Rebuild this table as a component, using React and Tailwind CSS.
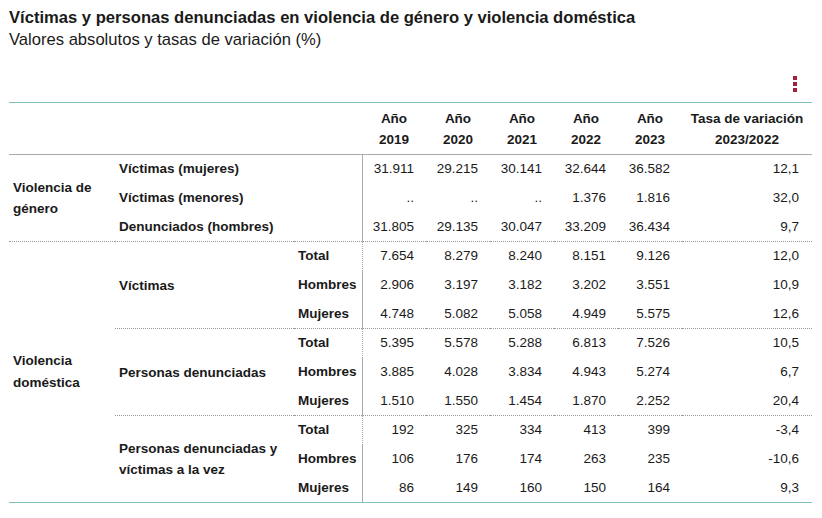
import React from 'react';

const years = ['2019', '2020', '2021', '2022', '2023'];

const genero = [
  { label: 'Víctimas (mujeres)', values: ['31.911', '29.215', '30.141', '32.644', '36.582'], rate: '12,1' },
  { label: 'Víctimas (menores)', values: ['..', '..', '..', '1.376', '1.816'], rate: '32,0' },
  { label: 'Denunciados (hombres)', values: ['31.805', '29.135', '30.047', '33.209', '36.434'], rate: '9,7' },
];

const domestica = [
  {
    label: 'Víctimas',
    rows: [
      { sex: 'Total', values: ['7.654', '8.279', '8.240', '8.151', '9.126'], rate: '12,0' },
      { sex: 'Hombres', values: ['2.906', '3.197', '3.182', '3.202', '3.551'], rate: '10,9' },
      { sex: 'Mujeres', values: ['4.748', '5.082', '5.058', '4.949', '5.575'], rate: '12,6' },
    ],
  },
  {
    label: 'Personas denunciadas',
    rows: [
      { sex: 'Total', values: ['5.395', '5.578', '5.288', '6.813', '7.526'], rate: '10,5' },
      { sex: 'Hombres', values: ['3.885', '4.028', '3.834', '4.943', '5.274'], rate: '6,7' },
      { sex: 'Mujeres', values: ['1.510', '1.550', '1.454', '1.870', '2.252'], rate: '20,4' },
    ],
  },
  {
    label: 'Personas denunciadas y víctimas a la vez',
    rows: [
      { sex: 'Total', values: ['192', '325', '334', '413', '399'], rate: '-3,4' },
      { sex: 'Hombres', values: ['106', '176', '174', '263', '235'], rate: '-10,6' },
      { sex: 'Mujeres', values: ['86', '149', '160', '150', '164'], rate: '9,3' },
    ],
  },
];

const ValueCells = ({ values, rate, dotted }) => {
  const top = dotted ? 'border-t border-dotted border-t-[#999]' : '';
  return (
    <>
      {values.map((v, i) => (
        <td
          key={i}
          className={`h-[29px] pr-3 text-right align-middle ${top} ${i === 0 ? 'border-l border-l-[#aaa]' : ''}`}
        >
          {v}
        </td>
      ))}
      <td className={`h-[29px] pr-[13px] text-right align-middle ${top}`}>{rate}</td>
    </>
  );
};

const App = () => {
  return (
    <div className="min-h-[518px] bg-white px-[9px] pt-[8px] font-['Liberation_Sans',Arial,sans-serif] text-[#1a1a1a]">
      <h1 className="text-[16.6px] font-bold leading-[20px]">
        Víctimas y personas denunciadas en violencia de género y violencia doméstica
      </h1>
      <p className="text-[16.6px] leading-[24px]">Valores absolutos y tasas de variación (%)</p>

      <div className="flex h-[50px] items-end justify-end pb-[10px] pr-[16px]">
        <div className="flex flex-col gap-[2px]">
          <span className="block h-[4px] w-[4px] bg-[#a3203f]" />
          <span className="block h-[4px] w-[4px] bg-[#a3203f]" />
          <span className="block h-[4px] w-[4px] bg-[#a3203f]" />
        </div>
      </div>

      <table className="w-[803px] table-fixed border-collapse border-y border-y-[#7fc0b8] text-[13.5px]">
        <colgroup>
          <col className="w-[106px]" />
          <col className="w-[179px]" />
          <col className="w-[68px]" />
          <col className="w-[64px]" />
          <col className="w-[64px]" />
          <col className="w-[64px]" />
          <col className="w-[64px]" />
          <col className="w-[64px]" />
          <col />
        </colgroup>
        <thead>
          <tr className="border-b border-b-[#aaa]">
            <th className="h-[52px]" />
            <th />
            <th />
            {years.map((y) => (
              <th key={y} className="text-center align-middle font-bold leading-[21px]">
                Año
                <br />
                {y}
              </th>
            ))}
            <th className="text-center align-middle font-bold leading-[21px]">
              Tasa de variación
              <br />
              2023/2022
            </th>
          </tr>
        </thead>
        <tbody>
          {genero.map((r, i) => (
            <tr key={r.label}>
              {i === 0 && (
                <td rowSpan={3} className="pl-1 align-middle font-bold leading-[21px]">
                  Violencia de género
                </td>
              )}
              <td colSpan={2} className="pl-1 align-middle font-bold">
                {r.label}
              </td>
              <ValueCells values={r.values} rate={r.rate} />
            </tr>
          ))}

          {domestica.map((g, gi) =>
            g.rows.map((r, ri) => {
              const dotted = ri === 0;
              const top = dotted ? 'border-t border-dotted border-t-[#999]' : '';
              return (
                <tr key={`${gi}-${ri}`}>
                  {gi === 0 && ri === 0 && (
                    <td
                      rowSpan={9}
                      className="border-t border-dotted border-t-[#999] pl-1 pr-6 align-middle font-bold leading-[22px]"
                    >
                      Violencia doméstica
                    </td>
                  )}
                  {ri === 0 && (
                    <td rowSpan={3} className={`pl-1 pr-2 align-middle font-bold leading-[21px] ${top}`}>
                      {g.label}
                    </td>
                  )}
                  <td className={`pl-1 align-middle font-bold ${top}`}>{r.sex}</td>
                  <ValueCells values={r.values} rate={r.rate} dotted={dotted} />
                </tr>
              );
            })
          )}
        </tbody>
      </table>
    </div>
  );
};

export default App;
